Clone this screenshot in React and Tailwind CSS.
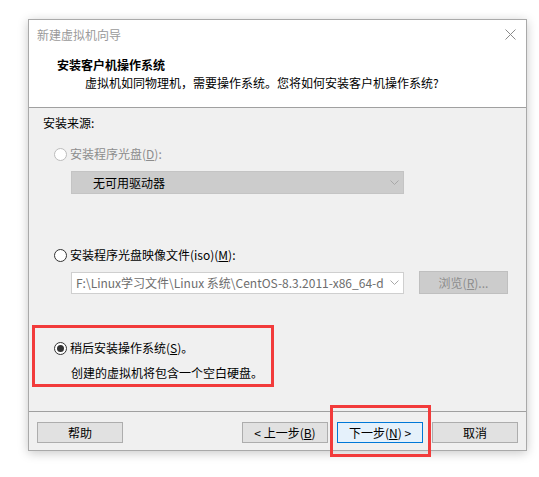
import React from 'react';

const font = { fontFamily: '"Noto Sans CJK SC", "Microsoft YaHei", sans-serif' };

function Radio({ checked, disabled }) {
  return (
    <span
      className={
        'relative grid h-[13px] w-[13px] shrink-0 place-items-center rounded-full border bg-white ' +
        (disabled ? 'border-[#bcbcbc]' : 'border-[#333333]')
      }
    >
      {checked && <span className="h-[7px] w-[7px] rounded-full bg-[#333333]" />}
    </span>
  );
}

function Chevron() {
  return (
    <svg width="9" height="5" viewBox="0 0 9 5" className="shrink-0">
      <path d="M0.5 0.5 L4.5 4.5 L8.5 0.5" fill="none" stroke="#a8a8a8" strokeWidth="1" />
    </svg>
  );
}

function Btn({ children, primary, className = '' }) {
  return (
    <button
      className={
        'flex h-[21px] w-[86px] items-center justify-center border text-[12px] leading-none text-black ' +
        (primary ? 'border-[#0078d7] bg-[#e5f1fb] ' : 'border-[#adadad] bg-[#e1e1e1] ') +
        className
      }
    >
      {children}
    </button>
  );
}

export default function App() {
  return (
    <div className="relative h-[477px] w-[539px] bg-white pl-[28px] pt-[19px] text-[12px] text-black" style={font}>
      {/* window */}
      <div className="flex w-[499px] flex-col border border-[#a9a9a9] bg-white shadow-[0_2px_10px_rgba(0,0,0,0.22)]">
        {/* title bar */}
        <div className="flex h-[29px] items-center justify-between pl-[8px] pr-[10px]">
          <span className="text-[12px] text-[#9a9a9a]">新建虚拟机向导</span>
          <svg width="11" height="11" viewBox="0 0 11 11">
            <path d="M0.5 0.5 L10.5 10.5 M10.5 0.5 L0.5 10.5" stroke="#8a8a8a" strokeWidth="1" />
          </svg>
        </div>

        {/* header */}
        <div className="h-[58px] pl-[28px] pt-[7px]">
          <div className="font-bold leading-[18px]">安装客户机操作系统</div>
          <div className="pl-[28px] leading-[18px]">虚拟机如同物理机，需要操作系统。您将如何安装客户机操作系统?</div>
        </div>
        <div className="h-px bg-[#a0a0a0]" />

        {/* body */}
        <div className="h-[303px] bg-[#f0f0f0] pl-[14px] pt-[6px]">
          <div className="leading-[18px]">安装来源:</div>

          <div className="mt-[13px] flex h-[18px] items-center gap-[3px] pl-[11px]">
            <Radio disabled />
            <span className="text-[#8d8d8d]">
              安装程序光盘(<span className="underline">D</span>):
            </span>
          </div>
          <div className="ml-[28px] mt-[8px] flex h-[23px] w-[333px] items-center justify-between border border-[#c4c4c4] bg-[#cccccc] pl-[21px] pr-[4px]">
            <span>无可用驱动器</span>
            <Chevron />
          </div>

          <div className="mt-[52px] flex h-[18px] items-center gap-[3px] pl-[11px]">
            <Radio />
            <span>
              安装程序光盘映像文件(iso)(<span className="underline">M</span>):
            </span>
          </div>
          <div className="mt-[7px] flex items-center pl-[28px]">
            <div className="flex h-[22px] w-[333px] items-center justify-between border border-[#cfcfcf] bg-white pl-[4px] pr-[4px]">
              <span className="overflow-hidden whitespace-nowrap text-[#6d6d6d]">F:\Linux学习文件\Linux 系统\CentOS-8.3.2011-x86_64-d</span>
              <Chevron />
            </div>
            <button className="ml-[15px] flex h-[23px] w-[89px] items-center justify-center border border-[#bfbfbf] bg-[#cccccc] text-[12px] text-[#8d8d8d]">
              浏览(<span className="underline">R</span>)...
            </button>
          </div>

          <div className="mt-[45px] flex h-[18px] items-center gap-[3px] pl-[11px]">
            <Radio checked />
            <span>
              稍后安装操作系统(<span className="underline">S</span>)。
            </span>
          </div>
          <div className="mt-[7px] pl-[28px] leading-[18px]">创建的虚拟机将包含一个空白硬盘。</div>
        </div>
        <div className="h-px bg-[#a0a0a0]" />

        {/* footer */}
        <div className="flex h-[38px] items-start bg-[#f0f0f0] pl-[8px] pr-[8px] pt-[10px]">
          <Btn>帮助</Btn>
          <div className="flex-1" />
          <Btn>
            &lt; 上一步(<span className="underline">B</span>)
          </Btn>
          <Btn primary className="ml-[9px]">
            下一步(<span className="underline">N</span>) &gt;
          </Btn>
          <Btn className="ml-[9px]">取消</Btn>
        </div>
      </div>

      {/* red annotation boxes */}
      <div className="pointer-events-none absolute left-[32px] top-[325px] h-[62px] w-[242px] border-[3px] border-[#f23b3b]" />
      <div className="pointer-events-none absolute left-[330px] top-[405px] h-[52px] w-[101px] border-[3px] border-[#f23b3b]" />
    </div>
  );
}
